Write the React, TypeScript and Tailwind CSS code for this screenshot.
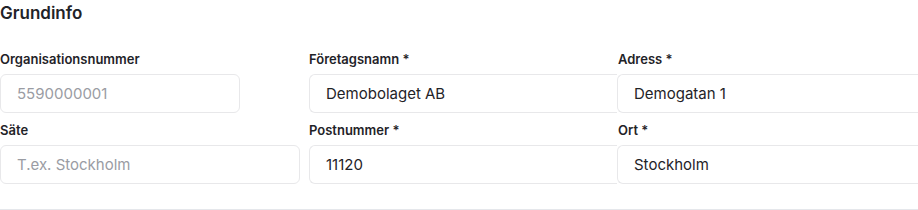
import type { ReactNode } from "react";

function Field({ label, children }: { label: string; children: ReactNode }) {
  return (
    <div className="flex flex-col">
      <label className="mb-[7px] h-4 text-[13px] leading-4 font-semibold text-[#1f2328] whitespace-nowrap">
        {label}
      </label>
      {children}
    </div>
  );
}

const inputBase =
  "h-[39px] border border-[#e8e8ea] bg-white px-4 text-[15px] text-[#1f2328] outline-none placeholder:text-[#9a9ca3]";

export default function App() {
  return (
    <div className="h-[210px] w-[918px] overflow-hidden border-b border-[#e5e7eb] bg-white font-['Inter',sans-serif]">
      <h2 className="pt-px text-[17px] leading-6 font-semibold text-[#1f2328]">Grundinfo</h2>

      <div className="mt-[26px] grid grid-cols-[300px_300px_320px] gap-x-[9px] gap-y-[9px]">
        <Field label="Organisationsnummer">
          <input className={`${inputBase} w-[240px] rounded-md`} placeholder="5590000001" />
        </Field>
        <Field label="Företagsnamn *">
          <input className={`${inputBase} w-[308px] rounded-l-md border-r-0`} defaultValue="Demobolaget AB" />
        </Field>
        <Field label="Adress *">
          <input className={`${inputBase} -ml-px w-[320px] rounded-l-md border-r-0`} defaultValue="Demogatan 1" />
        </Field>

        <Field label="Säte">
          <input className={`${inputBase} w-[300px] rounded-md`} placeholder="T.ex. Stockholm" />
        </Field>
        <Field label="Postnummer *">
          <input className={`${inputBase} w-[308px] rounded-l-md border-r-0`} defaultValue="11120" />
        </Field>
        <Field label="Ort *">
          <input className={`${inputBase} -ml-px w-[320px] rounded-l-md border-r-0`} defaultValue="Stockholm" />
        </Field>
      </div>
    </div>
  );
}
